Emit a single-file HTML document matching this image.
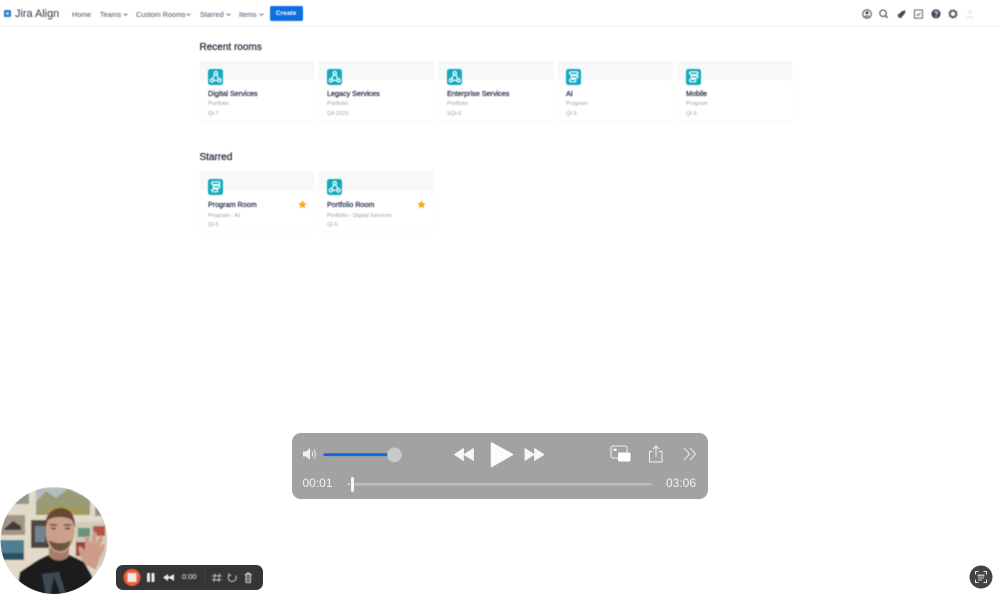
<!DOCTYPE html>
<html>
<head>
<meta charset="utf-8">
<style>
html,body{margin:0;padding:0;background:#fff;}
body{width:999px;height:595px;position:relative;overflow:hidden;font-family:"Liberation Sans",sans-serif;color:#2d3348;}
.a{position:absolute;white-space:nowrap;}
.blur{filter:blur(.4px);}
.nav{top:9.5px;font-size:7.2px;line-height:10px;color:#46506a;}
.nav svg{position:absolute;top:3.5px;}
.h{font-size:10px;font-weight:normal;color:#2b3245;line-height:12px;-webkit-text-stroke:.3px #2b3245;}
.card{position:absolute;width:114px;height:60px;background:#fff;box-shadow:0 1px 2px rgba(40,50,80,.045);}
.card .top{position:absolute;left:0;top:0;width:114px;height:19px;background:#f7f8f9;}
.card .ic{position:absolute;left:7.5px;top:8px;width:15.5px;height:15.5px;border-radius:2.5px;background:#13a9be;}
.card .ic svg{display:block;width:15.5px;height:15.5px;}
.card .t{position:absolute;left:8px;top:28px;font-size:7.2px;line-height:10px;color:#333a4f;white-space:nowrap;-webkit-text-stroke:.28px #333a4f;}
.card .s1{position:absolute;left:8px;top:40px;font-size:5.7px;line-height:7px;color:#9a9eac;white-space:nowrap;}
.card .s2{position:absolute;left:8px;top:50px;font-size:5.5px;line-height:7px;color:#9a9eac;white-space:nowrap;}
.star{position:absolute;left:98px;top:28.500px;}
</style>
</head>
<body>
<svg width="0" height="0" style="position:absolute">
<defs>
<symbol id="port" viewBox="0 0 15 15"><g fill="none" stroke="#fff" stroke-width="1.200"><circle cx="7.500" cy="4" r="1.600"/><circle cx="3.800" cy="11" r="1.600"/><circle cx="11.200" cy="11" r="1.600"/><path d="M6.600 5.400 4.600 9.500M8.400 5.400 10.400 9.500M5.500 11H9.500"/></g></symbol>
<symbol id="prog" viewBox="0 0 15 15"><g fill="none" stroke="#fff" stroke-width="1.200"><rect x="3.500" y="2.800" width="8" height="2.600" rx="1.300"/><rect x="5" y="6.300" width="6.500" height="2.400" rx="1.200"/><rect x="3.500" y="9.800" width="6" height="2.600" rx="1.300"/></g></symbol>
<symbol id="chev" viewBox="0 0 5 3"><path d="M.6.6 2.500 2.400 4.400.6" fill="none" stroke="#566078" stroke-width=".8"/></symbol>
</defs>
</svg>

<!-- top nav -->
<div class="a" style="left:0;top:0;width:999px;height:26px;background:#fff;border-bottom:1px solid #f0f1f2;"></div>
<svg class="a blur" style="left:4px;top:10px" width="7" height="7" viewBox="0 0 7 7"><rect width="7" height="7" rx="1" fill="#2f7ad0"/><rect x="2.200" y="2.200" width="2.600" height="2.600" fill="#cfe2f6"/></svg>
<div class="a blur" style="left:15px;top:6.500px;font-size:10.900px;line-height:15px;color:#2f364a;">Jira Align</div>
<div class="a nav blur" style="left:72px;">Home</div>
<div class="a nav blur" style="left:100px;">Teams<svg style="left:23px" width="5" height="3"><use href="#chev"/></svg></div>
<div class="a nav blur" style="left:136px;">Custom Rooms<svg style="left:50px" width="5" height="3"><use href="#chev"/></svg></div>
<div class="a nav blur" style="left:200px;">Starred<svg style="left:26px" width="5" height="3"><use href="#chev"/></svg></div>
<div class="a nav blur" style="left:239px;">Items<svg style="left:20px" width="5" height="3"><use href="#chev"/></svg></div>
<div class="a blur" style="left:269.500px;top:6px;width:33px;height:15px;background:#0f6fdc;border-radius:2px;color:#fff;font-size:6.600px;line-height:16.500px;text-align:center;font-weight:bold;">Create</div>

<!-- right icons -->
<svg class="a blur" style="left:860px;top:7px" width="115" height="14" viewBox="0 0 115 14">
<g fill="none" stroke="#3f4658">
<circle cx="7" cy="7" r="4.300" stroke-width="1"/>
<circle cx="7" cy="5.800" r="1.600" fill="#3f4658" stroke="none"/>
<path d="M3.900 9.800C4.800 8 9.200 8 10.100 9.800" fill="#3f4658" stroke="none"/>
<circle cx="23" cy="6.200" r="3.200" stroke-width="1.100"/>
<path d="M25.400 8.600 27.600 10.800" stroke-width="1.200"/>
</g>
<path d="M37 8 39.500 6.600C41 4.500 43 3.400 45.500 3.200 45.400 5.800 44.200 7.800 42.200 9.300L41 11.500 39.800 10.200 38.800 11 38 10 38.500 9Z" fill="#3f4658"/>
<rect x="54.500" y="3" width="8" height="8.200" fill="none" stroke="#4a5163" stroke-width=".9"/>
<path d="M56.600 7.200 58 8.600 60.400 5.600" fill="none" stroke="#4a5163" stroke-width=".9"/>
<circle cx="76" cy="6.900" r="4.600" fill="#3f4658"/>
<path d="M74.600 5.800C74.600 4 77.600 4 77.600 5.700 77.600 6.800 76 6.800 76 8" fill="none" stroke="#fff" stroke-width=".9"/>
<circle cx="76" cy="9.400" r=".6" fill="#fff"/>
<circle cx="93" cy="6.900" r="3.100" fill="none" stroke="#3f4658" stroke-width="1.500"/>
<circle cx="93" cy="6.900" r="4.200" fill="none" stroke="#3f4658" stroke-width="1" stroke-dasharray="1.400 1.900"/>
<circle cx="110" cy="5" r="2.400" fill="#eceef0"/>
<path d="M106 11.500C106 8 114 8 114 11.500Z" fill="#eceef0"/>
</svg>

<!-- sections -->
<div class="a h blur" style="left:199.500px;top:41.500px;">Recent rooms</div>
<div class="a h blur" style="left:199.500px;top:151.500px;">Starred</div>

<div class="blur">
<div class="card" style="left:200px;top:61px"><div class="top"></div><div class="ic"><svg><use href="#port"/></svg></div><div class="t">Digital Services</div><div class="s1">Portfolio</div><div class="s2">QI-7</div></div>
<div class="card" style="left:319px;top:61px"><div class="top"></div><div class="ic"><svg><use href="#port"/></svg></div><div class="t">Legacy Services</div><div class="s1">Portfolio</div><div class="s2">Q4-2023</div></div>
<div class="card" style="left:439px;top:61px"><div class="top"></div><div class="ic"><svg><use href="#port"/></svg></div><div class="t">Enterprise Services</div><div class="s1">Portfolio</div><div class="s2">SQI-6</div></div>
<div class="card" style="left:558px;top:61px"><div class="top"></div><div class="ic"><svg><use href="#prog"/></svg></div><div class="t">AI</div><div class="s1">Program</div><div class="s2">QI-5</div></div>
<div class="card" style="left:678px;top:61px"><div class="top"></div><div class="ic"><svg><use href="#prog"/></svg></div><div class="t">Mobile</div><div class="s1">Program</div><div class="s2">QI-6</div></div>

<div class="card" style="left:200px;top:171px"><div class="top"></div><div class="ic"><svg><use href="#prog"/></svg></div><div class="t" style="top:28.500px">Program Room</div><div class="s1" style="top:41.500px">Program - AI</div><div class="s2" style="top:51px">QI-5</div>
<svg class="star" width="9" height="9" viewBox="0 0 10 10"><path d="M5 .4 6.400 3.400 9.700 3.800 7.300 6 7.900 9.400 5 7.700 2.100 9.400 2.700 6 .3 3.800 3.600 3.400Z" fill="#f5ab1b"/></svg></div>
<div class="card" style="left:319px;top:171px"><div class="top"></div><div class="ic"><svg><use href="#port"/></svg></div><div class="t" style="top:28.500px">Portfolio Room</div><div class="s1" style="top:41.500px">Portfolio - Digital Services</div><div class="s2" style="top:51px">QI-5</div>
<svg class="star" width="9" height="9" viewBox="0 0 10 10"><path d="M5 .4 6.400 3.400 9.700 3.800 7.300 6 7.900 9.400 5 7.700 2.100 9.400 2.700 6 .3 3.800 3.600 3.400Z" fill="#f5ab1b"/></svg></div>
</div>

<!-- player -->
<div class="a" style="left:291.500px;top:432.500px;width:416px;height:66.500px;background:#a2a2a0;border-radius:9px;"></div>
<svg class="a" style="left:291.500px;top:432.500px" width="416" height="67" viewBox="0 0 416 67">
<!-- volume -->
<path d="M11 18.500h3L18 15V27l-4-3.500h-3Z" fill="#eee"/>
<path d="M20 18.500c1 1.500 1 3.500 0 5M22 16.500c1.800 2.500 1.800 6.500 0 9" fill="none" stroke="#eee" stroke-width="1"/>
<rect x="31.500" y="20.300" width="66" height="2.800" rx="1.400" fill="#1467d8"/>
<circle cx="102.500" cy="21.800" r="7.300" fill="#c9c9c7"/>
<!-- rewind -->
<path d="M171.500 15.500V27.500L162.500 21.500ZM181.500 15.500V27.500L172 21.500Z" fill="#f6f6f6" stroke="#f6f6f6" stroke-width=".8" stroke-linejoin="round"/>
<!-- play -->
<path d="M199.500 10 220.500 21.500 199.500 33.500Z" fill="#fbfbfb" stroke="#fbfbfb" stroke-width="1.500" stroke-linejoin="round"/>
<!-- fwd -->
<path d="M233 15.500V27.500L242 21.500ZM242.500 15.500V27.500L252 21.500Z" fill="#f6f6f6" stroke="#f6f6f6" stroke-width=".8" stroke-linejoin="round"/>
<!-- pip -->
<rect x="319" y="13" width="16" height="12" rx="2" fill="none" stroke="#f0f0f0" stroke-width="1"/>
<rect x="321.500" y="15.500" width="3" height="2.500" fill="#f0f0f0"/>
<rect x="326" y="19.500" width="12.500" height="9" rx="1.500" fill="#fff"/>
<!-- share -->
<path d="M360.500 18.500h-3v10.500h12.500V18.500h-3" fill="none" stroke="#f0f0f0" stroke-width="1"/>
<path d="M364 24V13.500M361 16l3-3 3 3" fill="none" stroke="#f0f0f0" stroke-width="1"/>
<!-- more -->
<path d="M392 15 397.500 21 392 27M398 15 403.500 21 398 27" fill="none" stroke="#eaeaea" stroke-width="1"/>
<!-- scrubber -->
<rect x="62" y="50" width="298" height="2.600" rx="1.300" fill="#bdbdbb"/>
<circle cx="57" cy="51.300" r="1" fill="#eee"/>
<rect x="59" y="44" width="3" height="15" rx="1.500" fill="#f6f6f6"/>
</svg>
<div class="a" style="left:302.500px;top:476px;font-size:12px;line-height:15px;color:#f2f2f2;">00:01</div>
<div class="a" style="left:666px;top:476px;font-size:12px;line-height:15px;color:#f2f2f2;">03:06</div>

<!-- avatar -->
<svg class="a" style="left:0;top:486px" width="108" height="109" viewBox="0 0 108 109">
<defs><clipPath id="c"><circle cx="54" cy="54.500" r="53.500"/></clipPath><filter id="f"><feGaussianBlur stdDeviation=".8"/></filter></defs>
<g clip-path="url(#c)"><g filter="url(#f)">
<rect width="108" height="109" fill="#e3d9c9"/>
<rect x="36" y="2" width="54" height="27" fill="#9a9a74"/>
<path d="M36 16 46 5 56 12 68 3 90 14V2H36Z" fill="#b3bdc0"/>
<path d="M38 26 60 19 88 24V28H38Z" fill="#a39a55"/>
<rect x="15" y="7" width="14" height="11" fill="#8d9a85"/>
<rect x="95" y="21" width="7" height="9" fill="#95958a"/>
<rect x="1" y="29" width="24" height="20" fill="#a09586"/>
<path d="M4 43 13 35 21 40V44H4Z" fill="#3f3a38"/>
<rect x="0" y="54" width="24" height="20" fill="#4d7e92"/>
<rect x="1" y="67" width="23" height="7" fill="#2c4f60"/>
<rect x="31" y="34" width="18" height="28" fill="#4f453f"/>
<rect x="35" y="40" width="10" height="16" fill="#6f8591"/>
<rect x="75" y="36" width="31" height="44" fill="#cfcabb"/>
<rect x="78" y="42" width="12" height="9" fill="#6a9080"/>
<rect x="93" y="40" width="12" height="10" fill="#b55248"/>
<rect x="76" y="56" width="9" height="14" fill="#9c3f38"/>
<path d="M16 109 20 86 38 74 48 69H70L84 76 92 90 96 109Z" fill="#1f1c1f"/>
<path d="M42 88 46 109H50L54 90 61 109H66L59 86Z" fill="#3e4a55"/>
<path d="M49 62 49 70C54 76 64 76 69 70L69 62Z" fill="#a57d68"/>
<ellipse cx="60" cy="45" rx="14.500" ry="22" fill="#c9a08a"/>
<path d="M45 43C44 28 53 22 61 22 69 22 76 29 75 42L72 34C66 30 54 30 48 34Z" fill="#6a4630"/>
<path d="M49 54C51 69 69 69 71 54 67 58 54 58 49 54Z" fill="#6e5243"/>
<path d="M50 39h7M64 39h7" stroke="#57402f" stroke-width="1.500"/>
<path d="M51 42.500h5M65 42.500h5" stroke="#44352b" stroke-width="1.500"/>
<path d="M85 78C81 72 76 62 80 60L85 64 85 50 88.500 50 90.500 58 93.500 45 97 47 95.500 58 100.500 49 103 53 99 61 105 57 104 63 99 73 96 84Z" fill="#cf9c88"/>
</g></g>
</svg>

<!-- recorder bar -->
<div class="a" style="left:116px;top:564.500px;width:147px;height:25px;background:#353535;border-radius:7px;"></div>
<svg class="a blur" style="left:116px;top:564.500px" width="147" height="25" viewBox="0 0 147 25">
<circle cx="16" cy="12.500" r="8.500" fill="#ef5f3c"/>
<rect x="11.500" y="8" width="9" height="9" rx="1" fill="#f3e9e4"/>
<rect x="31" y="8" width="3" height="9" rx=".5" fill="#eee"/>
<rect x="35.500" y="8" width="3" height="9" rx=".5" fill="#eee"/>
<path d="M52 9V16L47 12.500ZM58 9V16L52.500 12.500Z" fill="#eee"/>
<path d="M48 11.500h10v2H48Z" fill="#eee"/>
<path d="M89 5V20" stroke="#4a4a4a" stroke-width=".7"/>
<path d="M99 8.500 98 17M103.500 8.500 102.500 17M96 10.800H105.500M96 14.800H105.500" stroke="#ddd" stroke-width=".8" fill="none"/>
<path d="M113.500 9.500A4 4 0 1 0 119.700 10.500" fill="none" stroke="#ddd" stroke-width=".9"/>
<path d="M113 8V10.500H115.500" fill="none" stroke="#ddd" stroke-width=".8"/>
<path d="M128.500 9.500H136M130 9.500V17.500H134.500V9.500M131 9.500V8H133.500V9.500" fill="none" stroke="#ddd" stroke-width="1"/>
<path d="M131.500 11v5M133 11v5" stroke="#ddd" stroke-width=".6"/>
</svg>
<div class="a blur" style="left:182px;top:572px;font-size:7.500px;line-height:10px;color:#eee;">0:00</div>

<!-- bottom right -->
<svg class="a" style="left:969px;top:565px" width="24" height="24" viewBox="0 0 24 24">
<circle cx="12" cy="12" r="11.500" fill="#444"/>
<path d="M6.500 9.500V6.500H9.500M14.500 6.500H17.500V9.500M17.500 14.500V17.500H14.500M9.500 17.500H6.500V14.500" fill="none" stroke="#e4e4e4" stroke-width="1"/>
<path d="M8.500 9.500H15.500V11.500H8.500Z" fill="#bbb"/>
<path d="M9 13H15M9 15H13" stroke="#ccc" stroke-width=".9"/>
</svg>
</body>
</html>
